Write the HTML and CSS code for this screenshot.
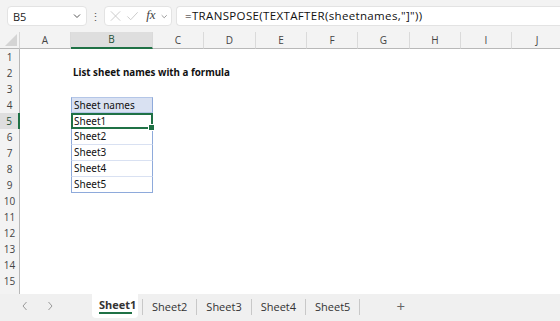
FILE: index.html
```html
<!DOCTYPE html>
<html lang="en">
<head>
    <meta charset="UTF-8">
    <title>Excel - sheet names</title>
    <link rel="stylesheet" href="styles.css">
</head>
<body>
    <div class="app">
        <div class="formula-bar">
            <div class="name-box">
                <span>B5</span>
                <svg width="10" height="10" viewBox="0 0 10 10"><path d="M2 3.5 L5 6.5 L8 3.5" fill="none" stroke="#555" stroke-width="1"/></svg>
            </div>
            <div class="dots">⋮</div>
            <div class="fx-box">
                <svg width="14" height="14" viewBox="0 0 14 14"><path d="M2 2 L12 12 M12 2 L2 12" stroke="#c8c8c8" stroke-width="1"/></svg>
                <svg width="14" height="14" viewBox="0 0 14 14"><path d="M1.5 7.5 L5 11 L12.5 3" fill="none" stroke="#c8c8c8" stroke-width="1"/></svg>
                <span class="fx">fx</span>
                <svg width="9" height="9" viewBox="0 0 10 10"><path d="M2 3.5 L5 6.5 L8 3.5" fill="none" stroke="#888" stroke-width="1"/></svg>
            </div>
            <div class="formula-input">=TRANSPOSE(TEXTAFTER(sheetnames,"]"))</div>
        </div>

        <div class="sheet">
            <div class="corner"><svg width="12" height="12" viewBox="0 0 12 12"><path d="M12 0 L12 12 L0 12 Z" fill="#d4d4d4"/></svg></div>
            <div class="col-head">A</div>
            <div class="col-head active">B</div>
            <div class="col-head">C</div>
            <div class="col-head">D</div>
            <div class="col-head">E</div>
            <div class="col-head">F</div>
            <div class="col-head">G</div>
            <div class="col-head">H</div>
            <div class="col-head">I</div>
            <div class="col-head">J</div>

            <div class="row-head">1</div><div class="cell span"></div>
            <div class="row-head">2</div><div class="cell"></div><div class="cell title span-rest">List sheet names with a formula</div>
            <div class="row-head">3</div><div class="cell span"></div>
            <div class="row-head">4</div><div class="cell"></div><div class="cell tbl tbl-head">Sheet names</div><div class="cell span-c"></div>
            <div class="row-head active">5</div><div class="cell"></div><div class="cell tbl selected">Sheet1<span class="handle"></span></div><div class="cell span-c"></div>
            <div class="row-head">6</div><div class="cell"></div><div class="cell tbl">Sheet2</div><div class="cell span-c"></div>
            <div class="row-head">7</div><div class="cell"></div><div class="cell tbl">Sheet3</div><div class="cell span-c"></div>
            <div class="row-head">8</div><div class="cell"></div><div class="cell tbl">Sheet4</div><div class="cell span-c"></div>
            <div class="row-head">9</div><div class="cell"></div><div class="cell tbl tbl-last">Sheet5</div><div class="cell span-c"></div>
            <div class="row-head">10</div><div class="cell span"></div>
            <div class="row-head">11</div><div class="cell span"></div>
            <div class="row-head">12</div><div class="cell span"></div>
            <div class="row-head">13</div><div class="cell span"></div>
            <div class="row-head">14</div><div class="cell span"></div>
            <div class="row-head">15</div><div class="cell span"></div>
            <div class="row-head"></div><div class="cell span"></div>
        </div>

        <div class="tab-bar">
            <div class="nav">
                <svg width="8" height="10" viewBox="0 0 8 10"><path d="M5.5 1 L2 5 L5.5 9" fill="none" stroke="#9a9a9a" stroke-width="1"/></svg>
                <svg width="8" height="10" viewBox="0 0 8 10"><path d="M2.5 1 L6 5 L2.5 9" fill="none" stroke="#9a9a9a" stroke-width="1"/></svg>
            </div>
            <div class="tab active">Sheet1</div>
            <div class="tab">Sheet2</div>
            <div class="tab">Sheet3</div>
            <div class="tab">Sheet4</div>
            <div class="tab">Sheet5</div>
            <div class="add">+</div>
        </div>
    </div>
</body>
</html>
```

FILE: styles.css
```css
html, body {
    margin: 0;
    padding: 0;
}
body {
    width: 560px;
    height: 321px;
    overflow: hidden;
    background: #ffffff;
    font-family: "Open Sans", "Noto Sans", sans-serif;
}
.app {
    display: flex;
    flex-direction: column;
    height: 321px;
}

/* formula bar */
.formula-bar {
    height: 32px;
    flex-shrink: 0;
    background: #f3f3f3;
    display: flex;
    align-items: center;
    padding-left: 7px;
    box-sizing: border-box;
}
.name-box {
    width: 80px;
    height: 20px;
    background: #fff;
    border: 1px solid #e3e3e3;
    border-radius: 4px;
    box-sizing: border-box;
    display: flex;
    align-items: center;
    justify-content: space-between;
    padding: 0 4px 0 5px;
    font-size: 11px;
    color: #222;
}
.dots {
    width: 17px;
    text-align: center;
    font-size: 11px;
    color: #555;
}
.fx-box {
    width: 68px;
    height: 20px;
    background: #fff;
    border: 1px solid #e3e3e3;
    border-radius: 4px;
    box-sizing: border-box;
    display: flex;
    align-items: center;
    padding: 0 3px 0 4px;
    gap: 4px;
}
.fx {
    font-family: "Liberation Serif", serif;
    font-style: italic;
    font-size: 13px;
    color: #444;
    margin-left: 3px;
    margin-top: -2px;
}
.formula-input {
    flex: 1;
    margin-left: 4px;
    height: 20px;
    background: #fff;
    border: 1px solid #e3e3e3;
    border-right: none;
    border-radius: 4px 0 0 4px;
    box-sizing: border-box;
    padding-left: 8px;
    font-size: 11.5px;
    letter-spacing: 0.35px;
    line-height: 18px;
    color: #111;
    white-space: nowrap;
}

/* grid */
.sheet {
    flex: 1;
    display: grid;
    grid-template-columns: 20px 51px 82px 51px 52px 51px 51px 52px 51px 51px 51px;
    grid-template-rows: 17px;
    grid-auto-rows: 16px;
    overflow: hidden;
}
.corner {
    background: #f3f3f3;
    border-right: 1px solid #d6d6d6;
    border-bottom: 1px solid #b8b8b8;
    display: flex;
    align-items: flex-end;
    justify-content: flex-end;
    padding: 0 2px 2px 0;
}
.col-head {
    background: #f3f3f3;
    border-right: 1px solid #dadada;
    border-bottom: 1px solid #b8b8b8;
    font-size: 10px;
    color: #444;
    text-align: center;
    line-height: 16px;
}
.col-head.active {
    background: #dedede;
    border-bottom: 2px solid #1f7145;
    line-height: 15px;
    color: #1f5136;
}
.row-head {
    background: #f3f3f3;
    border-right: 1px solid #b8b8b8;
    font-size: 10px;
    color: #444;
    text-align: center;
    line-height: 16px;
}
.row-head.active {
    background: #dedede;
    border-right: 2px solid #1f7145;
    color: #1f5136;
}
.cell {
    font-family: "Noto Sans", "Open Sans", sans-serif;
    font-size: 10px;
    color: #111;
    line-height: 16px;
    padding-left: 2px;
    white-space: nowrap;
    box-sizing: border-box;
}
.span {
    grid-column: 2 / -1;
}
.span-rest {
    grid-column: 3 / -1;
}
.span-c {
    grid-column: 4 / -1;
}
.title {
    font-weight: bold;
    font-size: 9.8px;
}
.tbl {
    border-left: 1px solid #8eaadb;
    border-right: 1px solid #8eaadb;
    border-bottom: 1px solid #d9e1f2;
    line-height: 15px;
}
.tbl-head {
    background: #d9e1f2;
    border-top: 1px solid #b4c6e7;
    border-bottom: 1px solid #b4c6e7;
    line-height: 14px;
}
.tbl-last {
    border-bottom: 1px solid #8eaadb;
}
.selected {
    position: relative;
    border: 2px solid #1f7145;
    padding-left: 1px;
    line-height: 12px;
}
.handle {
    position: absolute;
    right: -4px;
    bottom: -4px;
    width: 5px;
    height: 5px;
    background: #1f7145;
    border: 1px solid #fff;
}

/* sheet tabs */
.tab-bar {
    height: 27px;
    flex-shrink: 0;
    background: #f0f0f0;
    display: flex;
    align-items: flex-start;
    font-size: 11px;
    color: #333;
}
.nav {
    width: 92px;
    height: 24px;
    display: flex;
    align-items: center;
    gap: 17px;
    padding-left: 21px;
    box-sizing: border-box;
}
.tab {
    box-sizing: border-box;
    height: 16px;
    margin-top: 5px;
    line-height: 16px;
    padding: 0 9px;
    border-right: 1px solid #c8c8c8;
}
.tab.active {
    background: #fff;
    border-right: none;
    border-radius: 0 0 4px 4px;
    font-weight: bold;
    margin-top: 0;
    height: 24px;
    line-height: 22px;
    padding: 0 7px;
    width: 46px;
    text-align: center;
    position: relative;
    margin-right: 4px;
}
.tab.active::after {
    content: "";
    position: absolute;
    left: 7px;
    right: 6px;
    bottom: 4px;
    height: 2px;
    background: #1f7145;
}
.tab:nth-child(3) {
    border-left: 1px solid #c8c8c8;
}
.add {
    margin-left: 36px;
    margin-top: 3px;
    font-size: 15px;
    color: #666;
    line-height: 18px;
}
```
